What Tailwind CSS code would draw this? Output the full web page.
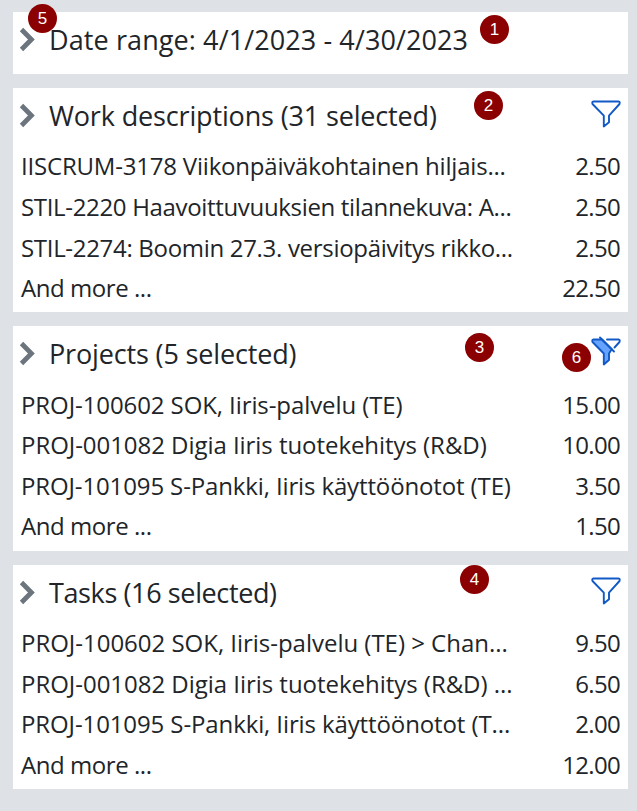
<!DOCTYPE html>
<html lang="en">
<head>
<meta charset="utf-8">
<title>Report filters</title>
<script src="https://cdn.jsdelivr.net/npm/@tailwindcss/browser@4"></script>
</head>
<body class="relative h-[811px] overflow-hidden bg-[#dee2e6] pt-3 pl-[13px] pr-[9px] font-['Open_Sans','Noto_Sans',sans-serif] text-[24px] text-[#212529] whitespace-nowrap">
<svg class="hidden">
  <symbol id="chev" viewBox="0 0 16 26"><path d="M2.5 2.5 L12.4 12.5 L2.5 22.5" fill="none" stroke="#6c757d" stroke-width="4.8"/></symbol>
  <symbol id="funnel" viewBox="0 0 30 28"><path d="M2.5 1.5H27.5Q29.3 1.7 28.5 4L18 15.7V22.3L12.8 26.5V15.7L1.5 4Q.7 1.7 2.5 1.5Z" fill="none" stroke="#1159c5" stroke-width="1.9" stroke-linejoin="round"/></symbol>
</svg>
<main class="flex flex-col gap-[14px]">
  <section class="h-[62px] bg-white px-2">
    <header class="flex h-[56px] items-center"><svg class="-ml-[2px] h-[26px] w-4 shrink-0"><use href="#chev"/></svg><h2 class="ml-[14px] text-[27px] tracking-[0.1px]">Date range: 4/1/2023 - 4/30/2023</h2></header>
  </section>
  <section class="h-[224px] bg-white px-2">
    <header class="mb-[2px] flex h-[56px] items-center"><svg class="-ml-[2px] h-[26px] w-4 shrink-0"><use href="#chev"/></svg><h2 class="ml-[14px] text-[27px] tracking-[-0.15px]">Work descriptions (31 selected)</h2><svg class="mb-1 -mr-[1px] ml-auto h-7 w-[30px]"><use href="#funnel"/></svg></header>
    <div class="flex h-[40.5px] items-center justify-between"><span class="tracking-[-0.2px]">IISCRUM-3178 Viikonpäiväkohtainen hiljais...</span><span class="tracking-[-0.7px]">2.50</span></div>
    <div class="flex h-[40.5px] items-center justify-between"><span class="tracking-[-0.33px]">STIL-2220 Haavoittuvuuksien tilannekuva: A...</span><span class="tracking-[-0.7px]">2.50</span></div>
    <div class="flex h-[40.5px] translate-y-px items-center justify-between"><span class="tracking-[-0.31px]">STIL-2274: Boomin 27.3. versiopäivitys rikko...</span><span class="tracking-[-0.7px]">2.50</span></div>
    <div class="flex h-[40.5px] items-center justify-between"><span class="tracking-[-0.45px]">And more ...</span><span class="tracking-[-0.7px]">22.50</span></div>
  </section>
  <section class="h-[225px] bg-white px-2">
    <header class="mb-[2px] flex h-[56px] items-center"><svg class="-ml-[2px] h-[26px] w-4 shrink-0"><use href="#chev"/></svg><h2 class="ml-[14px] text-[27px] tracking-[-0.15px]">Projects (5 selected)</h2>
      <svg class="mb-[6px] -mr-[1px] ml-auto h-[30px] w-[30px]" viewBox="0 0 30 30" stroke="#1159c5" stroke-width="1.9" stroke-linejoin="round" stroke-linecap="round"><path d="M2.5 3.5H11L20.7 13.2L18 17.5V24L12.8 28.5V17.5L1.5 6Q.7 3.7 2.5 3.5Z" fill="#66a3ff"/><path d="M9 1.5L23 15.5M16 3.5H27.5Q29.3 3.7 28.5 6L23.5 11.5" fill="none"/></svg></header>
    <div class="flex h-[40.5px] translate-y-px items-center justify-between"><span class="tracking-[-0.09px]">PROJ-100602 SOK, Iiris-palvelu (TE)</span><span class="tracking-[-0.7px]">15.00</span></div>
    <div class="flex h-[40.5px] items-center justify-between"><span class="tracking-[-0.05px]">PROJ-001082 Digia Iiris tuotekehitys (R&amp;D)</span><span class="tracking-[-0.7px]">10.00</span></div>
    <div class="flex h-[40.5px] translate-y-px items-center justify-between"><span class="tracking-[-0.13px]">PROJ-101095 S-Pankki, Iiris käyttöönotot (TE)</span><span class="tracking-[-0.7px]">3.50</span></div>
    <div class="flex h-[40.5px] items-center justify-between"><span class="tracking-[-0.45px]">And more ...</span><span class="tracking-[-0.7px]">1.50</span></div>
  </section>
  <section class="h-[224px] bg-white px-2">
    <header class="mb-[2px] flex h-[56px] items-center"><svg class="-ml-[2px] h-[26px] w-4 shrink-0"><use href="#chev"/></svg><h2 class="ml-[14px] text-[27px] tracking-[-0.38px]">Tasks (16 selected)</h2><svg class="mb-1 -mr-[1px] ml-auto h-7 w-[30px]"><use href="#funnel"/></svg></header>
    <div class="flex h-[40.5px] items-center justify-between"><span class="tracking-[-0.02px]">PROJ-100602 SOK, Iiris-palvelu (TE) &gt; Chan...</span><span class="tracking-[-0.7px]">9.50</span></div>
    <div class="flex h-[40.5px] items-center justify-between"><span class="tracking-[-0.03px]">PROJ-001082 Digia Iiris tuotekehitys (R&amp;D) ...</span><span class="tracking-[-0.7px]">6.50</span></div>
    <div class="flex h-[40.5px] items-center justify-between"><span class="tracking-[-0.11px]">PROJ-101095 S-Pankki, Iiris käyttöönotot (T...</span><span class="tracking-[-0.7px]">2.00</span></div>
    <div class="flex h-[40.5px] items-center justify-between"><span class="tracking-[-0.45px]">And more ...</span><span class="tracking-[-0.7px]">12.00</span></div>
  </section>
</main>
<div class="font-['Liberation_Sans',Arial,sans-serif] text-[17px] leading-none text-white">
  <span class="absolute left-[480px] top-[15px] flex size-[29px] items-center justify-center rounded-full bg-[#8b0000]">1</span>
  <span class="absolute left-[474px] top-[91px] flex size-[29px] items-center justify-center rounded-full bg-[#8b0000]">2</span>
  <span class="absolute left-[465px] top-[333px] flex size-[29px] items-center justify-center rounded-full bg-[#8b0000]">3</span>
  <span class="absolute left-[460px] top-[565px] flex size-[29px] items-center justify-center rounded-full bg-[#8b0000]">4</span>
  <span class="absolute left-[28px] top-[4px] flex size-[29px] items-center justify-center rounded-full bg-[#8b0000]">5</span>
  <span class="absolute left-[562px] top-[343px] flex size-[29px] items-center justify-center rounded-full bg-[#8b0000]">6</span>
</div>
</body>
</html>
